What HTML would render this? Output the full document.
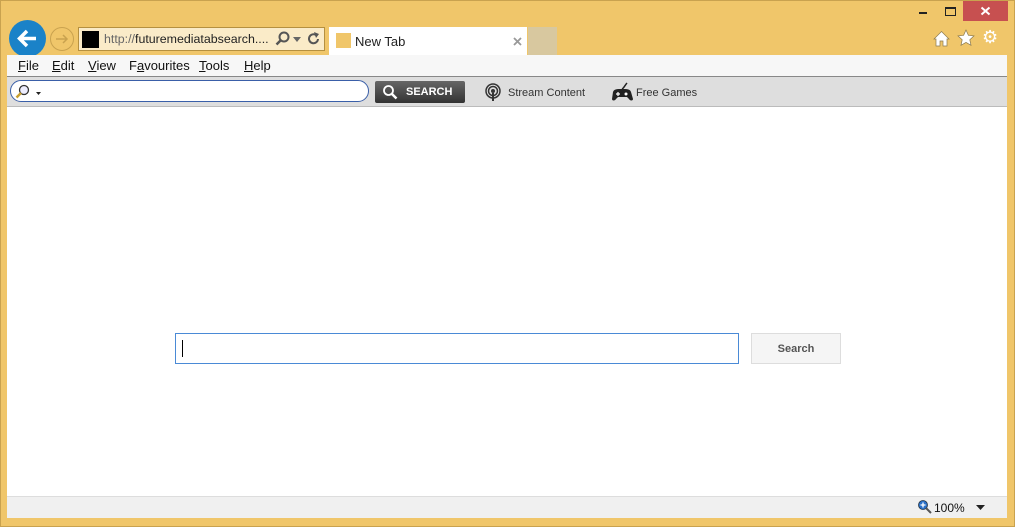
<!DOCTYPE html>
<html><head><meta charset="utf-8"><style>
*{margin:0;padding:0;box-sizing:border-box}
body{width:1015px;height:527px;background:#F0C66A;position:relative;overflow:hidden;font-family:"Liberation Sans",Arial,sans-serif}
.abs{position:absolute}
</style></head><body>
<div class="abs" style="left:0;top:0;width:1015px;height:527px;border:1px solid #c9a24f"></div>
<div class="abs" style="left:919px;top:12px;width:8px;height:2px;background:#222"></div>
<div class="abs" style="left:945px;top:7px;width:11px;height:9px;border:1px solid #222;border-top-width:2px"></div>
<div class="abs" style="left:963px;top:1px;width:45px;height:20px;background:#C75050"></div>
<svg class="abs" style="left:980px;top:6px" width="11" height="10"><path d="M1.5 1.5l8 7M9.5 1.5l-8 7" stroke="#fff" stroke-width="2"/></svg>
<div class="abs" style="left:9px;top:20px;width:37px;height:37px;border-radius:50%;background:#1a82c8"></div>
<svg class="abs" style="left:9px;top:20px" width="37" height="37"><path d="M27 18.5H11M18 11l-7.5 7.5L18 26" stroke="#fff" stroke-width="3.5" fill="none"/></svg>
<div class="abs" style="left:50px;top:27px;width:24px;height:24px;border-radius:50%;border:1.5px solid #c9a24f"></div>
<svg class="abs" style="left:50px;top:27px" width="24" height="24"><path d="M6 12h11M13 8l4 4-4 4" stroke="#c9a24f" stroke-width="1.5" fill="none"/></svg>
<div class="abs" style="left:78px;top:27px;width:247px;height:24px;background:#FAEBC8;border:1px solid #b59040"></div>
<div class="abs" style="left:82px;top:31px;width:17px;height:17px;background:#000"></div>
<div class="abs" style="left:104px;top:31px;font-size:12.4px;color:#222;line-height:17px"><span style="color:#666">http://</span>futuremediatabsearch....</div>
<svg class="abs" style="left:275px;top:31px" width="16" height="16"><circle cx="9" cy="6" r="4.5" stroke="#555" stroke-width="2" fill="none"/><path d="M6 9l-4.5 4.5" stroke="#555" stroke-width="2.5"/></svg>
<svg class="abs" style="left:293px;top:37px" width="8" height="5"><path d="M0 0h8L4 5z" fill="#666"/></svg>
<svg class="abs" style="left:307px;top:31px" width="14" height="16"><path d="M11 8a4.5 4.5 0 1 1-2-4" stroke="#555" stroke-width="2" fill="none"/><path d="M7 1l5 2-3 4z" fill="#555"/></svg>
<div class="abs" style="left:329px;top:27px;width:198px;height:28px;background:#fff"></div>
<div class="abs" style="left:336px;top:33px;width:15px;height:15px;background:#F0C66A"></div>
<div class="abs" style="left:355px;top:34px;font-size:13px;color:#222">New Tab</div>
<svg class="abs" style="left:513px;top:37px" width="9" height="9"><path d="M1 1l7 7M8 1l-7 7" stroke="#999" stroke-width="1.8"/></svg>
<div class="abs" style="left:528px;top:27px;width:29px;height:28px;background:#D8C89F"></div>
<svg class="abs" style="left:933px;top:30px" width="17" height="17"><path d="M1 9L8.5 1.5 16 9h-2v7H10v-5H7v5H3V9z" fill="#fff" stroke="#8a7a50" stroke-width="0.7"/></svg>
<svg class="abs" style="left:957px;top:29px" width="18" height="18"><path d="M9 1l2.4 5.3 5.6.6-4.2 3.8 1.2 5.6L9 13.4 4 16.3l1.2-5.6L1 6.9l5.6-.6z" fill="#fff" stroke="#8a7a50" stroke-width="0.7"/></svg>
<div class="abs" style="left:982px;top:27px;font-size:18px;color:#fff">⚙</div>
<div class="abs" style="left:7px;top:55px;width:1000px;height:22px;background:#f7f7f7;border-bottom:1px solid #888;font-size:13px;color:#111;line-height:21px">
<span class="abs" style="left:11px"><u>F</u>ile</span><span class="abs" style="left:45px"><u>E</u>dit</span><span class="abs" style="left:81px"><u>V</u>iew</span><span class="abs" style="left:122px">F<u>a</u>vourites</span><span class="abs" style="left:192px"><u>T</u>ools</span><span class="abs" style="left:237px"><u>H</u>elp</span></div>
<div class="abs" style="left:7px;top:77px;width:1000px;height:30px;background:#dedede;border-bottom:1px solid #bbb"></div>
<div class="abs" style="left:10px;top:80px;width:359px;height:22px;background:#fff;border:1px solid #3a5fa8;border-radius:11px"></div>
<svg class="abs" style="left:15px;top:84px" width="26" height="16"><circle cx="9" cy="6" r="4.5" stroke="#333" stroke-width="1.3" fill="#eef"/><path d="M6 9l-4.5 4.5" stroke="#c8a030" stroke-width="2.5"/><path d="M22 8h5l-2.5 3z" fill="#222" transform="translate(-1,0)"/></svg>
<div class="abs" style="left:375px;top:81px;width:90px;height:22px;background:linear-gradient(#666,#333);border-radius:2px;color:#fff;font-size:11px;font-weight:bold;line-height:22px;padding-left:31px">SEARCH</div>
<svg class="abs" style="left:382px;top:84px" width="16" height="16"><circle cx="6.5" cy="6.5" r="4.5" stroke="#fff" stroke-width="1.8" fill="none"/><path d="M10 10l4.5 4.5" stroke="#fff" stroke-width="2.5"/></svg>
<svg class="abs" style="left:484px;top:83px" width="18" height="18"><circle cx="9" cy="8" r="2" fill="#333"/><circle cx="9" cy="8" r="4.5" stroke="#333" fill="none" stroke-width="1.5"/><circle cx="9" cy="8" r="7" stroke="#333" fill="none" stroke-width="1.5"/><rect x="8" y="10" width="2" height="8" fill="#333"/></svg>
<div class="abs" style="left:508px;top:87px;font-size:11px;color:#333">Stream Content</div>
<svg class="abs" style="left:610px;top:80px" width="24" height="22"><path d="M12 9c2-1 3-4 5-6" stroke="#222" stroke-width="1.5" fill="none"/><path d="M3 12c1-3 4-3 9-3s8 0 9 3l2 7c0 2-3 2-4 0l-2-2H8l-2 2c-1 2-4 2-4 0z" fill="#222"/><circle cx="16" cy="14" r="1.5" fill="#fff"/><path d="M6 14h4M8 12v4" stroke="#fff" stroke-width="1.2"/></svg>
<div class="abs" style="left:636px;top:87px;font-size:11px;color:#333">Free Games</div>
<div class="abs" style="left:7px;top:107px;width:1000px;height:389px;background:#fff"></div>
<div class="abs" style="left:175px;top:333px;width:564px;height:31px;border:1px solid #4a8ad6;background:#fff"></div>
<div class="abs" style="left:182px;top:340px;width:1px;height:17px;background:#000"></div>
<div class="abs" style="left:751px;top:333px;width:90px;height:31px;border:1px solid #ddd;background:#f5f5f5;font-size:11px;color:#555;text-align:center;line-height:30px;font-weight:bold">Search</div>
<div class="abs" style="left:7px;top:496px;width:1000px;height:22px;background:#f0f0f0;border-top:1px solid #ddd"></div>
<svg class="abs" style="left:917px;top:499px" width="16" height="16"><circle cx="6" cy="6" r="4.5" fill="#2a70c8" stroke="#234" stroke-width="0.8"/><path d="M3.5 6h5M6 3.5v5" stroke="#fff" stroke-width="1.3"/><path d="M9 9l5 5" stroke="#555" stroke-width="2"/></svg>
<div class="abs" style="left:934px;top:501px;font-size:12px;color:#111">100%</div>
<svg class="abs" style="left:976px;top:505px" width="9" height="5"><path d="M0 0h9L4.5 5z" fill="#222"/></svg>
</body></html>
